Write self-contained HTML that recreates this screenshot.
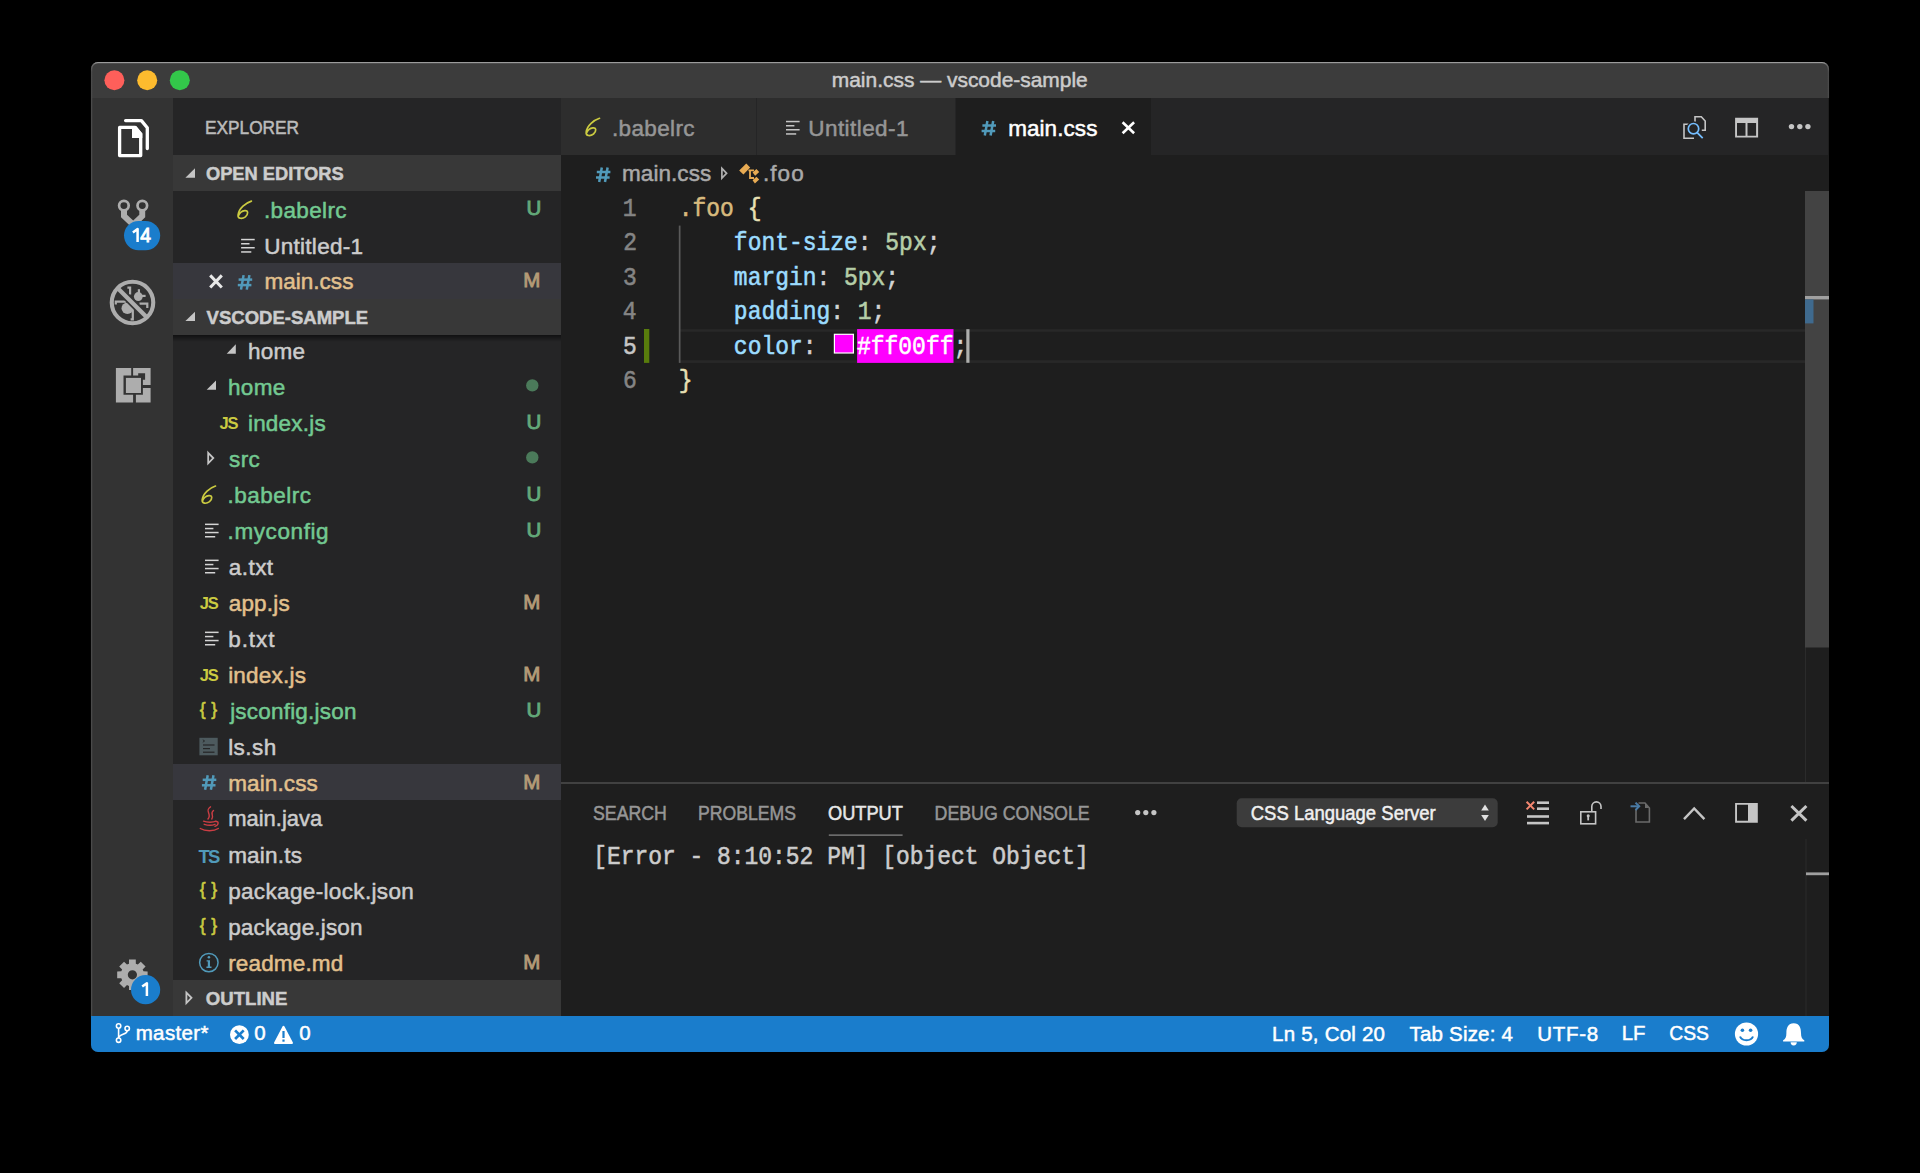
<!DOCTYPE html>
<html><head><meta charset="utf-8"><title>main.css — vscode-sample</title>
<style>html,body{margin:0;padding:0;background:#000;width:1920px;height:1173px;overflow:hidden}svg{display:block}</style>
</head><body>
<svg width="1920" height="1173" viewBox="0 0 1920 1173">
<defs><clipPath id="win"><rect x="91" y="62" width="1738" height="990" rx="7"/></clipPath><linearGradient id="shd" x1="0" y1="0" x2="0" y2="1"><stop offset="0" stop-color="#000" stop-opacity="0.55"/><stop offset="1" stop-color="#000" stop-opacity="0"/></linearGradient></defs>
<g clip-path="url(#win)">
<rect x="91" y="62" width="1738" height="990" fill="#1e1e1e" />
<rect x="91" y="62" width="1738" height="36" fill="#3c3c3c" />
<rect x="92" y="98" width="81" height="918" fill="#333333" />
<rect x="173" y="98" width="388" height="918" fill="#252526" />
<rect x="173" y="155" width="388" height="36" fill="#383838" />
<rect x="173" y="263" width="388" height="36" fill="#37373d" />
<rect x="173" y="764" width="388" height="36" fill="#37373d" />
<rect x="173" y="299" width="388" height="36" fill="#383838" />
<rect x="173" y="335" width="388" height="7" fill="url(#shd)" />
<rect x="173" y="980" width="388" height="36" fill="#383838" />
<rect x="561" y="98" width="1267" height="57" fill="#252526" />
<rect x="561" y="98" width="195" height="57" fill="#2d2d2d" />
<rect x="757" y="98" width="198" height="57" fill="#2d2d2d" />
<rect x="956" y="98" width="195" height="57" fill="#1e1e1e" />
<rect x="561" y="155" width="1267" height="627" fill="#1e1e1e" />
<rect x="680" y="329.2" width="1125" height="2.6" fill="#282828" />
<rect x="680" y="360.3" width="1125" height="2.6" fill="#282828" />
<rect x="678.8" y="225.6" width="1.7" height="137.3" fill="#5a5a5a" />
<rect x="644" y="329" width="5.3" height="33.9" fill="#587c0c" />
<rect x="1805" y="191" width="24" height="591" fill="#1e1e1e" />
<rect x="1805" y="191" width="1" height="591" fill="#2b2b2b" />
<rect x="1805" y="191" width="24" height="456.5" fill="#434343" />
<rect x="1805" y="296" width="24" height="3.4" fill="#a0a0a0" />
<rect x="1805" y="299.4" width="8.5" height="24" fill="#3f6a8e" />
<rect x="561" y="782" width="1268" height="234" fill="#1e1e1e" />
<rect x="561" y="782" width="1268" height="2" fill="#414141" />
<rect x="828.8" y="834.3" width="73.8" height="1.7" fill="#6b6b6b" />
<rect x="1236.7" y="798.3" width="261" height="29" fill="#3c3c3c" rx="5" />
<rect x="1805.5" y="839" width="23.5" height="177" fill="#1e1e1e" />
<rect x="1805.5" y="839" width="1" height="177" fill="#2b2b2b" />
<rect x="1806" y="872.4" width="23" height="2.8" fill="#a0a0a0" />
<rect x="91" y="1016" width="1738" height="36" fill="#1a7dcc" />
</g>
<defs><linearGradient id="edge" gradientUnits="userSpaceOnUse" x1="0" y1="62" x2="0" y2="72"><stop offset="0" stop-color="#a8a8a8"/><stop offset="0.25" stop-color="#6a6a6a"/><stop offset="1" stop-color="#4a4a4a"/></linearGradient></defs>
<path d="M91.6,1016 V69 A6.4,6.4 0 0 1 98,62.6 H1822 A6.4,6.4 0 0 1 1828.4,69 V98" fill="none" stroke="url(#edge)" stroke-width="1.3"/>
<circle cx="114.4" cy="80.2" r="10" fill="#fe5f5a"/>
<circle cx="147.2" cy="80.2" r="10" fill="#fdbb2e"/>
<circle cx="179.8" cy="80.2" r="10" fill="#33c74a"/>
<text x="831.74" y="87" font-family="Liberation Sans" font-size="21" font-weight="400" fill="#cccccc" stroke="#cccccc" stroke-width="0.5" transform="matrix(0.9972,0,0,1,2.353,0)" style="white-space:pre" >main.css — vscode-sample</text>
<text x="204.92" y="134.4" font-family="Liberation Sans" font-size="18.2" font-weight="400" fill="#bbbbbb" stroke="#bbbbbb" stroke-width="0.5" transform="matrix(0.9502,0,0,1,10.209,0)" style="white-space:pre" >EXPLORER</text>
<text x="205.97" y="180.5" font-family="Liberation Sans" font-size="19" font-weight="700" fill="#cccccc" stroke="#cccccc" stroke-width="0.5" transform="matrix(0.9623,0,0,1,7.760,0)" style="white-space:pre" >OPEN EDITORS</text>
<text x="206.61" y="324.2" font-family="Liberation Sans" font-size="19" font-weight="700" fill="#cccccc" stroke="#cccccc" stroke-width="0.5" transform="matrix(0.9756,0,0,1,5.036,0)" style="white-space:pre" >VSCODE-SAMPLE</text>
<text x="205.86" y="1004.8" font-family="Liberation Sans" font-size="19" font-weight="700" fill="#cccccc" stroke="#cccccc" stroke-width="0.5" transform="matrix(0.9781,0,0,1,4.500,0)" style="white-space:pre" >OUTLINE</text>
<text x="263.88" y="217.6" font-family="Liberation Sans" font-size="22.5" font-weight="400" fill="#73c991" stroke="#73c991" stroke-width="0.5" style="letter-spacing:0.384px;white-space:pre" >.babelrc</text>
<text x="264.21" y="253.7" font-family="Liberation Sans" font-size="22.5" font-weight="400" fill="#cccccc" stroke="#cccccc" stroke-width="0.5" style="letter-spacing:0.278px;white-space:pre" >Untitled-1</text>
<text x="264.44" y="289.3" font-family="Liberation Sans" font-size="22.5" font-weight="400" fill="#e2c08d" stroke="#e2c08d" stroke-width="0.5" style="letter-spacing:0.027px;white-space:pre" >main.css</text>
<defs><clipPath id="tree"><rect x="173" y="335" width="388" height="645"/></clipPath></defs>
<g clip-path="url(#tree)">
<text x="248.03" y="358.5" font-family="Liberation Sans" font-size="22.5" font-weight="400" fill="#cccccc" stroke="#cccccc" stroke-width="0.5" style="letter-spacing:0.275px;white-space:pre" >home</text>
<text x="228.03" y="394.5" font-family="Liberation Sans" font-size="22.5" font-weight="400" fill="#73c991" stroke="#73c991" stroke-width="0.5" style="letter-spacing:0.308px;white-space:pre" >home</text>
<text x="247.94" y="430.5" font-family="Liberation Sans" font-size="22.5" font-weight="400" fill="#73c991" stroke="#73c991" stroke-width="0.5" style="letter-spacing:0.211px;white-space:pre" >index.js</text>
<text x="229.04" y="466.5" font-family="Liberation Sans" font-size="22.5" font-weight="400" fill="#73c991" stroke="#73c991" stroke-width="0.5" style="letter-spacing:0.394px;white-space:pre" >src</text>
<text x="227.57" y="502.5" font-family="Liberation Sans" font-size="22.5" font-weight="400" fill="#73c991" stroke="#73c991" stroke-width="0.5" style="letter-spacing:0.484px;white-space:pre" >.babelrc</text>
<text x="227.57" y="538.5" font-family="Liberation Sans" font-size="22.5" font-weight="400" fill="#73c991" stroke="#73c991" stroke-width="0.5" style="letter-spacing:0.597px;white-space:pre" >.myconfig</text>
<text x="228.70" y="574.5" font-family="Liberation Sans" font-size="22.5" font-weight="400" fill="#cccccc" stroke="#cccccc" stroke-width="0.5" style="letter-spacing:0.475px;white-space:pre" >a.txt</text>
<text x="228.70" y="610.5" font-family="Liberation Sans" font-size="22.5" font-weight="400" fill="#e2c08d" stroke="#e2c08d" stroke-width="0.5" style="letter-spacing:0.202px;white-space:pre" >app.js</text>
<text x="228.14" y="646.5" font-family="Liberation Sans" font-size="22.5" font-weight="400" fill="#cccccc" stroke="#cccccc" stroke-width="0.5" style="letter-spacing:0.991px;white-space:pre" >b.txt</text>
<text x="228.14" y="682.5" font-family="Liberation Sans" font-size="22.5" font-weight="400" fill="#e2c08d" stroke="#e2c08d" stroke-width="0.5" style="letter-spacing:0.211px;white-space:pre" >index.js</text>
<text x="230.16" y="718.5" font-family="Liberation Sans" font-size="22.5" font-weight="400" fill="#73c991" stroke="#73c991" stroke-width="0.5" style="letter-spacing:0.203px;white-space:pre" >jsconfig.json</text>
<text x="228.14" y="754.5" font-family="Liberation Sans" font-size="22.5" font-weight="400" fill="#cccccc" stroke="#cccccc" stroke-width="0.5" style="letter-spacing:0.469px;white-space:pre" >ls.sh</text>
<text x="228.14" y="790.5" font-family="Liberation Sans" font-size="22.5" font-weight="400" fill="#e2c08d" stroke="#e2c08d" stroke-width="0.5" style="letter-spacing:0.127px;white-space:pre" >main.css</text>
<text x="228.17" y="826.5" font-family="Liberation Sans" font-size="22.5" font-weight="400" fill="#cccccc" stroke="#cccccc" stroke-width="0.5" transform="matrix(0.9775,0,0,1,5.143,0)" style="white-space:pre" >main.java</text>
<text x="228.14" y="862.5" font-family="Liberation Sans" font-size="22.5" font-weight="400" fill="#cccccc" stroke="#cccccc" stroke-width="0.5" style="letter-spacing:0.215px;white-space:pre" >main.ts</text>
<text x="228.14" y="898.5" font-family="Liberation Sans" font-size="22.5" font-weight="400" fill="#cccccc" stroke="#cccccc" stroke-width="0.5" style="letter-spacing:0.350px;white-space:pre" >package-lock.json</text>
<text x="228.14" y="934.5" font-family="Liberation Sans" font-size="22.5" font-weight="400" fill="#cccccc" stroke="#cccccc" stroke-width="0.5" style="letter-spacing:0.162px;white-space:pre" >package.json</text>
<text x="228.14" y="970.5" font-family="Liberation Sans" font-size="22.5" font-weight="400" fill="#e2c08d" stroke="#e2c08d" stroke-width="0.5" style="letter-spacing:0.172px;white-space:pre" >readme.md</text>
</g>
<text x="526.46" y="215.4" font-family="Liberation Sans" font-size="20.5" font-weight="400" fill="#63aa7a" stroke="#63aa7a" stroke-width="0.9" style="white-space:pre" >U</text>
<text x="523.36" y="287.2" font-family="Liberation Sans" font-size="20.5" font-weight="400" fill="#b49b76" stroke="#b49b76" stroke-width="0.9" style="white-space:pre" >M</text>
<text x="526.46" y="429.1" font-family="Liberation Sans" font-size="20.5" font-weight="400" fill="#63aa7a" stroke="#63aa7a" stroke-width="0.9" style="white-space:pre" >U</text>
<text x="526.46" y="501.1" font-family="Liberation Sans" font-size="20.5" font-weight="400" fill="#63aa7a" stroke="#63aa7a" stroke-width="0.9" style="white-space:pre" >U</text>
<text x="526.46" y="537.1" font-family="Liberation Sans" font-size="20.5" font-weight="400" fill="#63aa7a" stroke="#63aa7a" stroke-width="0.9" style="white-space:pre" >U</text>
<text x="523.36" y="608.9" font-family="Liberation Sans" font-size="20.5" font-weight="400" fill="#b49b76" stroke="#b49b76" stroke-width="0.9" style="white-space:pre" >M</text>
<text x="523.36" y="680.9" font-family="Liberation Sans" font-size="20.5" font-weight="400" fill="#b49b76" stroke="#b49b76" stroke-width="0.9" style="white-space:pre" >M</text>
<text x="526.46" y="717.1" font-family="Liberation Sans" font-size="20.5" font-weight="400" fill="#63aa7a" stroke="#63aa7a" stroke-width="0.9" style="white-space:pre" >U</text>
<text x="523.36" y="788.9" font-family="Liberation Sans" font-size="20.5" font-weight="400" fill="#b49b76" stroke="#b49b76" stroke-width="0.9" style="white-space:pre" >M</text>
<text x="523.36" y="968.9" font-family="Liberation Sans" font-size="20.5" font-weight="400" fill="#b49b76" stroke="#b49b76" stroke-width="0.9" style="white-space:pre" >M</text>
<circle cx="532.3" cy="385.4" r="6.2" fill="#4b7a5a"/>
<circle cx="532.3" cy="457.4" r="6.2" fill="#4b7a5a"/>
<text x="611.98" y="135.6" font-family="Liberation Sans" font-size="22.5" font-weight="400" fill="#969696" stroke="#969696" stroke-width="0.5" style="letter-spacing:0.355px;white-space:pre" >.babelrc</text>
<text x="808.31" y="135.6" font-family="Liberation Sans" font-size="22.5" font-weight="400" fill="#969696" stroke="#969696" stroke-width="0.5" style="letter-spacing:0.433px;white-space:pre" >Untitled-1</text>
<text x="1008.14" y="136" font-family="Liberation Sans" font-size="22.5" font-weight="400" fill="#ffffff" stroke="#ffffff" stroke-width="0.5" style="letter-spacing:0.070px;white-space:pre" >main.css</text>
<text x="622.04" y="181.4" font-family="Liberation Sans" font-size="22.5" font-weight="400" fill="#a9a9a9" stroke="#a9a9a9" stroke-width="0.5" style="letter-spacing:0.055px;white-space:pre" >main.css</text>
<text x="762.98" y="181.4" font-family="Liberation Sans" font-size="22.5" font-weight="400" fill="#a9a9a9" stroke="#a9a9a9" stroke-width="0.5" style="letter-spacing:1.054px;white-space:pre" >.foo</text>
<text x="622.66" y="216.00" font-family="Liberation Mono" font-size="22.95" fill="#858585" stroke="#858585" stroke-width="0.5" transform="matrix(1,0,0,1.15,0,-32.400)">1</text>
<text x="623.24" y="250.40" font-family="Liberation Mono" font-size="22.95" fill="#858585" stroke="#858585" stroke-width="0.5" transform="matrix(1,0,0,1.15,0,-37.560)">2</text>
<text x="623.01" y="284.80" font-family="Liberation Mono" font-size="22.95" fill="#858585" stroke="#858585" stroke-width="0.5" transform="matrix(1,0,0,1.15,0,-42.720)">3</text>
<text x="622.78" y="319.20" font-family="Liberation Mono" font-size="22.95" fill="#858585" stroke="#858585" stroke-width="0.5" transform="matrix(1,0,0,1.15,0,-47.880)">4</text>
<text x="623.01" y="353.60" font-family="Liberation Mono" font-size="22.95" fill="#c6c6c6" stroke="#c6c6c6" stroke-width="0.5" transform="matrix(1,0,0,1.15,0,-53.040)">5</text>
<text x="623.12" y="388.00" font-family="Liberation Mono" font-size="22.95" fill="#858585" stroke="#858585" stroke-width="0.5" transform="matrix(1,0,0,1.15,0,-58.200)">6</text>
<text x="678.80" y="216.00" font-family="Liberation Mono" font-size="22.95" fill="#d7ba7d" stroke="#d7ba7d" stroke-width="0.5" transform="matrix(1,0,0,1.15,0,-32.400)" style="white-space:pre">.foo</text>
<text x="747.65" y="216.00" font-family="Liberation Mono" font-size="22.95" fill="#e8e0b4" stroke="#e8e0b4" stroke-width="0.5" transform="matrix(1,0,0,1.15,0,-32.400)" style="white-space:pre">{</text>
<text x="733.88" y="250.40" font-family="Liberation Mono" font-size="22.95" fill="#9cdcfe" stroke="#9cdcfe" stroke-width="0.5" transform="matrix(1,0,0,1.15,0,-37.560)" style="white-space:pre">font-size</text>
<text x="857.81" y="250.40" font-family="Liberation Mono" font-size="22.95" fill="#d4d4d4" stroke="#d4d4d4" stroke-width="0.5" transform="matrix(1,0,0,1.15,0,-37.560)" style="white-space:pre">:</text>
<text x="885.35" y="250.40" font-family="Liberation Mono" font-size="22.95" fill="#b5cea8" stroke="#b5cea8" stroke-width="0.5" transform="matrix(1,0,0,1.15,0,-37.560)" style="white-space:pre">5px</text>
<text x="926.66" y="250.40" font-family="Liberation Mono" font-size="22.95" fill="#d4d4d4" stroke="#d4d4d4" stroke-width="0.5" transform="matrix(1,0,0,1.15,0,-37.560)" style="white-space:pre">;</text>
<text x="733.88" y="284.80" font-family="Liberation Mono" font-size="22.95" fill="#9cdcfe" stroke="#9cdcfe" stroke-width="0.5" transform="matrix(1,0,0,1.15,0,-42.720)" style="white-space:pre">margin</text>
<text x="816.50" y="284.80" font-family="Liberation Mono" font-size="22.95" fill="#d4d4d4" stroke="#d4d4d4" stroke-width="0.5" transform="matrix(1,0,0,1.15,0,-42.720)" style="white-space:pre">:</text>
<text x="844.04" y="284.80" font-family="Liberation Mono" font-size="22.95" fill="#b5cea8" stroke="#b5cea8" stroke-width="0.5" transform="matrix(1,0,0,1.15,0,-42.720)" style="white-space:pre">5px</text>
<text x="885.35" y="284.80" font-family="Liberation Mono" font-size="22.95" fill="#d4d4d4" stroke="#d4d4d4" stroke-width="0.5" transform="matrix(1,0,0,1.15,0,-42.720)" style="white-space:pre">;</text>
<text x="733.88" y="319.20" font-family="Liberation Mono" font-size="22.95" fill="#9cdcfe" stroke="#9cdcfe" stroke-width="0.5" transform="matrix(1,0,0,1.15,0,-47.880)" style="white-space:pre">padding</text>
<text x="830.27" y="319.20" font-family="Liberation Mono" font-size="22.95" fill="#d4d4d4" stroke="#d4d4d4" stroke-width="0.5" transform="matrix(1,0,0,1.15,0,-47.880)" style="white-space:pre">:</text>
<text x="857.81" y="319.20" font-family="Liberation Mono" font-size="22.95" fill="#b5cea8" stroke="#b5cea8" stroke-width="0.5" transform="matrix(1,0,0,1.15,0,-47.880)" style="white-space:pre">1</text>
<text x="871.58" y="319.20" font-family="Liberation Mono" font-size="22.95" fill="#d4d4d4" stroke="#d4d4d4" stroke-width="0.5" transform="matrix(1,0,0,1.15,0,-47.880)" style="white-space:pre">;</text>
<text x="733.88" y="353.60" font-family="Liberation Mono" font-size="22.95" fill="#9cdcfe" stroke="#9cdcfe" stroke-width="0.5" transform="matrix(1,0,0,1.15,0,-53.040)" style="white-space:pre">color</text>
<text x="802.73" y="353.60" font-family="Liberation Mono" font-size="22.95" fill="#d4d4d4" stroke="#d4d4d4" stroke-width="0.5" transform="matrix(1,0,0,1.15,0,-53.040)" style="white-space:pre">:</text>
<rect x="834.4" y="334.3" width="19" height="18.7" fill="#ff00ff" stroke="#ffffff" stroke-width="1.2"/>
<rect x="857.1" y="329.1" width="96.4" height="33.8" fill="#ff00ff" />
<text x="857.07" y="353.60" font-family="Liberation Mono" font-size="22.95" fill="#ffffff" stroke="#ffffff" stroke-width="0.5" transform="matrix(1,0,0,1.15,0,-53.040)" style="white-space:pre">#ff00ff</text>
<text x="953.46" y="353.60" font-family="Liberation Mono" font-size="22.95" fill="#d4d4d4" stroke="#d4d4d4" stroke-width="0.5" transform="matrix(1,0,0,1.15,0,-53.040)" style="white-space:pre">;</text>
<rect x="966.3" y="329.2" width="3.2" height="33.6" fill="#aeafad" />
<text x="678.80" y="388.00" font-family="Liberation Mono" font-size="22.95" fill="#e8e0b4" stroke="#e8e0b4" stroke-width="0.5" transform="matrix(1,0,0,1.15,0,-58.200)" style="white-space:pre">}</text>
<text x="593.00" y="819.8" font-family="Liberation Sans" font-size="19.3" font-weight="400" fill="#969696" stroke="#969696" stroke-width="0.5" transform="matrix(0.9183,0,0,1,48.461,0)" style="white-space:pre" >SEARCH</text>
<text x="698.09" y="819.8" font-family="Liberation Sans" font-size="19.3" font-weight="400" fill="#969696" stroke="#969696" stroke-width="0.5" transform="matrix(0.9132,0,0,1,60.611,0)" style="white-space:pre" >PROBLEMS</text>
<text x="827.98" y="819.8" font-family="Liberation Sans" font-size="19.3" font-weight="400" fill="#e7e7e7" stroke="#e7e7e7" stroke-width="0.5" transform="matrix(0.9453,0,0,1,45.271,0)" style="white-space:pre" >OUTPUT</text>
<text x="934.58" y="819.8" font-family="Liberation Sans" font-size="19.3" font-weight="400" fill="#969696" stroke="#969696" stroke-width="0.5" transform="matrix(0.9218,0,0,1,73.086,0)" style="white-space:pre" >DEBUG CONSOLE</text>
<text x="1250.77" y="820" font-family="Liberation Sans" font-size="20.5" font-weight="400" fill="#f0f0f0" stroke="#f0f0f0" stroke-width="0.5" transform="matrix(0.9025,0,0,1,121.919,0)" style="white-space:pre" >CSS Language Server</text>
<text x="593.14" y="864.2" font-family="Liberation Mono" font-size="22.95" fill="#cccccc" stroke="#cccccc" stroke-width="0.5" transform="matrix(1,0,0,1.15,0,-129.630)" style="white-space:pre">[Error - 8:10:52 PM] [object Object]</text>
<text x="135.67" y="1040" font-family="Liberation Sans" font-size="20.5" font-weight="400" fill="#ffffff" stroke="#ffffff" stroke-width="0.5" style="letter-spacing:0.378px;white-space:pre" >master*</text>
<text x="254.18" y="1040" font-family="Liberation Sans" font-size="20.5" font-weight="400" fill="#ffffff" stroke="#ffffff" stroke-width="0.5" style="white-space:pre" >0</text>
<text x="299.18" y="1040" font-family="Liberation Sans" font-size="20.5" font-weight="400" fill="#ffffff" stroke="#ffffff" stroke-width="0.5" style="white-space:pre" >0</text>
<text x="1272.11" y="1040.5" font-family="Liberation Sans" font-size="20.5" font-weight="400" fill="#ffffff" stroke="#ffffff" stroke-width="0.5" style="letter-spacing:0.215px;white-space:pre" >Ln 5, Col 20</text>
<text x="1409.59" y="1040.5" font-family="Liberation Sans" font-size="20.5" font-weight="400" fill="#ffffff" stroke="#ffffff" stroke-width="0.5" style="letter-spacing:0.185px;white-space:pre" >Tab Size: 4</text>
<text x="1537.36" y="1040.5" font-family="Liberation Sans" font-size="20.5" font-weight="400" fill="#ffffff" stroke="#ffffff" stroke-width="0.5" style="letter-spacing:0.661px;white-space:pre" >UTF-8</text>
<text x="1621.78" y="1040.5" font-family="Liberation Sans" font-size="20.5" font-weight="400" fill="#ffffff" stroke="#ffffff" stroke-width="0.5" transform="matrix(0.9896,0,0,1,16.844,0)" style="white-space:pre" >LF</text>
<text x="1669.13" y="1040.5" font-family="Liberation Sans" font-size="20.5" font-weight="400" fill="#ffffff" stroke="#ffffff" stroke-width="0.5" transform="matrix(0.9433,0,0,1,94.714,0)" style="white-space:pre" >CSS</text>
<g fill="none" stroke="#ffffff" stroke-width="3.3" stroke-linejoin="round" stroke-linecap="round"><path d="M119.6,127.4 H135.2 L140.7,134 V155.6 H119.6 Z"/><path d="M125.6,120.6 H141.4 L147.3,127.8 V148.6"/></g>
<path d="M132,126 H136 L142.3,133.4 V138 H132 Z" fill="#ffffff"/>
<g fill="none" stroke="#adadad" stroke-width="2.7"><circle cx="123.9" cy="205.6" r="4.8"/><circle cx="142.3" cy="205.6" r="4.8"/></g>
<path d="M121,209.5 H127 V214.8 L133.2,220.6 L139.3,214.8 V209.5 H145.2 V217.3 L136.4,225.8 H130 L121,217.3 Z" fill="#adadad"/>
<rect x="124" y="220.9" width="36.2" height="29.4" rx="14.7" fill="#1a7dcc"/>
<g fill="#adadad"><ellipse cx="127.4" cy="308.2" rx="5.9" ry="5.7"/><ellipse cx="138.3" cy="296.6" rx="4.4" ry="4.5"/></g>
<g fill="none" stroke="#adadad" stroke-width="2.2"><path d="M115.8,304.6 V301.6 H126"/><path d="M130.6,319.4 H132.8 V309"/><path d="M127.4,287.6 H130.1 V294.5"/><path d="M138.9,289.2 V294"/><path d="M141,295.9 H145.6"/><path d="M139.5,303.6 H147.3 V307.9"/></g>
<path d="M117.5,288 L147,317.5" stroke="#333333" stroke-width="7.6"/>
<path d="M117.5,288 L147,317.5" stroke="#adadad" stroke-width="4.3"/>
<circle cx="132.5" cy="302.5" r="20.75" fill="none" stroke="#adadad" stroke-width="4.1"/>
<g fill="#adadad"><path d="M115.9,367.9 H131.2 V375.5 H123.5 V394.7 H133.1 V402.6 H115.9 Z"/><path d="M133.1,367.9 H150.6 V385.1 H142.9 V379.8 H145.1 V373.2 H138.2 V375.5 H133.1 Z"/><path d="M142.9,387.9 H150.6 V402.6 H135.9 V394.7 H142.9 Z"/><rect x="125.9" y="377.9" width="15.1" height="15.1"/></g>
<path d="M128.97,963.72 L129.00,959.58 L135.80,959.58 L135.83,963.72 L137.81,964.54 L140.76,961.63 L145.57,966.44 L142.66,969.39 L143.48,971.37 L147.62,971.40 L147.62,978.20 L143.48,978.23 L142.66,980.21 L145.57,983.16 L140.76,987.97 L137.81,985.06 L135.83,985.88 L135.80,990.02 L129.00,990.02 L128.97,985.88 L126.99,985.06 L124.04,987.97 L119.23,983.16 L122.14,980.21 L121.32,978.23 L117.18,978.20 L117.18,971.40 L121.32,971.37 L122.14,969.39 L119.23,966.44 L124.04,961.63 L126.99,964.54 Z M137.0,974.8 A4.6,4.6 0 1,0 127.80000000000001,974.8 A4.6,4.6 0 1,0 137.0,974.8 Z" fill="#adadad" fill-rule="evenodd"/>
<circle cx="145.6" cy="989.7" r="14.6" fill="#1a7dcc"/>
<path d="M195,168.2 L195,177.7 L185.4,177.7 Z" fill="#c5c5c5"/>
<path d="M195,311.7 L195,321 L185.4,321 Z" fill="#c5c5c5"/>
<path d="M235.8,344.2 L235.8,353.7 L226.7,353.7 Z" fill="#c5c5c5"/>
<path d="M216,380.4 L216,389.8 L206.7,389.8 Z" fill="#c5c5c5"/>
<path d="M208.2,452.8 L213.3,458 L208.2,463.3 Z" fill="none" stroke="#c5c5c5" stroke-width="1.8" stroke-linejoin="miter"/>
<path d="M186.4,992.6 L191.5,997.8 L186.4,1003.1 Z" fill="none" stroke="#c5c5c5" stroke-width="1.8"/>
<path transform="translate(236.9,200.3)" d="M14.5,0.8 C9,2.5 2,8 1.2,14.5 C0.6,18.8 5.5,18.8 8.5,16.5 C11.5,14 11.6,9.8 7.8,10.4 C5,10.8 2.6,13 1.8,15" fill="none" stroke="#cbcb41" stroke-width="1.7" stroke-linecap="round"/>
<g fill="#d4d4d4"><rect x="241.1" y="238.8" width="13.6" height="1.5"/><rect x="241.1" y="243.0" width="8.4" height="1.5"/><rect x="241.1" y="247.0" width="13.6" height="1.5"/><rect x="241.1" y="251.20000000000002" width="10.2" height="1.5"/></g>
<g transform="translate(237.4,274.6) scale(1.0)" stroke="#519aba" stroke-width="2.5" fill="none"><path d="M6.2,0.5 L3.6,15"/><path d="M12,0.5 L9.4,15"/><path d="M1.2,5 H14.8"/><path d="M0.4,10.5 H14"/></g>
<g stroke="#e8e8e8" stroke-width="3" stroke-linecap="butt"><path d="M210.2,275.4 L221.8,287.5"/><path d="M221.8,275.4 L210.2,287.5"/></g>
<text x="219.6" y="428.9" font-family="Liberation Sans" font-weight="700" font-size="16.5" fill="#cbcb41" style="letter-spacing:-1.3px">JS</text>
<path transform="translate(201,485.2)" d="M14.5,0.8 C9,2.5 2,8 1.2,14.5 C0.6,18.8 5.5,18.8 8.5,16.5 C11.5,14 11.6,9.8 7.8,10.4 C5,10.8 2.6,13 1.8,15" fill="none" stroke="#cbcb41" stroke-width="1.7" stroke-linecap="round"/>
<g fill="#d4d4d4"><rect x="205" y="523.6" width="13.6" height="1.5"/><rect x="205" y="527.8000000000001" width="8.4" height="1.5"/><rect x="205" y="531.8000000000001" width="13.6" height="1.5"/><rect x="205" y="536.0" width="10.2" height="1.5"/></g>
<g fill="#d4d4d4"><rect x="205" y="559.6" width="13.6" height="1.5"/><rect x="205" y="563.8000000000001" width="8.4" height="1.5"/><rect x="205" y="567.8000000000001" width="13.6" height="1.5"/><rect x="205" y="572.0" width="10.2" height="1.5"/></g>
<g fill="#d4d4d4"><rect x="205" y="631.6" width="13.6" height="1.5"/><rect x="205" y="635.8000000000001" width="8.4" height="1.5"/><rect x="205" y="639.8000000000001" width="13.6" height="1.5"/><rect x="205" y="644.0" width="10.2" height="1.5"/></g>
<text x="199.8" y="608.9" font-family="Liberation Sans" font-weight="700" font-size="16.5" fill="#cbcb41" style="letter-spacing:-1.3px">JS</text>
<text x="199.8" y="680.9" font-family="Liberation Sans" font-weight="700" font-size="16.5" fill="#cbcb41" style="letter-spacing:-1.3px">JS</text>
<text x="199.8" y="714.5" font-family="Liberation Sans" font-weight="400" font-size="17.5" fill="#cbcb41" stroke="#cbcb41" stroke-width="0.6" style="white-space:pre;letter-spacing:0.4px">{ }</text>
<text x="199.8" y="894.5" font-family="Liberation Sans" font-weight="400" font-size="17.5" fill="#cbcb41" stroke="#cbcb41" stroke-width="0.6" style="white-space:pre;letter-spacing:0.4px">{ }</text>
<text x="199.8" y="930.5" font-family="Liberation Sans" font-weight="400" font-size="17.5" fill="#cbcb41" stroke="#cbcb41" stroke-width="0.6" style="white-space:pre;letter-spacing:0.4px">{ }</text>
<rect x="199.4" y="737.8" width="18.3" height="17.5" fill="#4d5a5e"/>
<g fill="#252526"><rect x="203" y="744.4" width="11.5" height="1.2"/><rect x="203" y="748" width="7" height="1.2"/><rect x="203" y="751.6" width="11.5" height="1.2"/></g>
<path d="M202.8,739.8 L204.6,741 L202.8,742.2" fill="none" stroke="#252526" stroke-width="0.9"/>
<g transform="translate(201.5,774.8) scale(1.0)" stroke="#519aba" stroke-width="2.5" fill="none"><path d="M6.2,0.5 L3.6,15"/><path d="M12,0.5 L9.4,15"/><path d="M1.2,5 H14.8"/><path d="M0.4,10.5 H14"/></g>
<g transform="translate(0,0)" fill="none" stroke="#cc3e44" stroke-width="1.4" stroke-linecap="round"><path d="M210.5,806.8 C204,811 212.5,814 208,819"/><path d="M213.5,810.5 C209.5,813.5 214.5,815.5 211.8,819"/><path d="M203.5,821.2 C207,822.5 213,822.5 216,821.2"/><path d="M204.2,824.3 C207.5,825.4 212.5,825.4 215,824.3"/><path d="M215.8,821.5 C219,821 219,825 215,826.3"/><path d="M200.3,828.5 C205,831.5 214,831.5 218.3,828.5"/></g>
<text x="198.5" y="862.6" font-family="Liberation Sans" font-weight="700" font-size="18.5" fill="#519aba" style="letter-spacing:-1.9px">TS</text>
<circle cx="208.85" cy="962.6" r="9.2" fill="none" stroke="#519aba" stroke-width="1.5"/>
<g fill="#519aba"><circle cx="208.9" cy="957.2" r="1.3"/><path d="M206.6,960.2 H210 V966.6 H211.5 V967.9 H206.4 V966.6 H207.8 V961.5 H206.6 Z"/></g>
<path transform="translate(585,117.5)" d="M14.5,0.8 C9,2.5 2,8 1.2,14.5 C0.6,18.8 5.5,18.8 8.5,16.5 C11.5,14 11.6,9.8 7.8,10.4 C5,10.8 2.6,13 1.8,15" fill="none" stroke="#cbcb41" stroke-width="1.7" stroke-linecap="round"/>
<g fill="#c5c5c5"><rect x="786" y="120.8" width="13.6" height="1.5"/><rect x="786" y="125.0" width="8.4" height="1.5"/><rect x="786" y="129.0" width="13.6" height="1.5"/><rect x="786" y="133.2" width="10.2" height="1.5"/></g>
<g transform="translate(981.2,120.5) scale(1.0)" stroke="#519aba" stroke-width="2.5" fill="none"><path d="M6.2,0.5 L3.6,15"/><path d="M12,0.5 L9.4,15"/><path d="M1.2,5 H14.8"/><path d="M0.4,10.5 H14"/></g>
<g stroke="#ffffff" stroke-width="2.6"><path d="M1122.6,122.3 L1134.1,133.3"/><path d="M1134.1,122.3 L1122.6,133.3"/></g>
<g transform="translate(595.6,167) scale(1.0)" stroke="#519aba" stroke-width="2.5" fill="none"><path d="M6.2,0.5 L3.6,15"/><path d="M12,0.5 L9.4,15"/><path d="M1.2,5 H14.8"/><path d="M0.4,10.5 H14"/></g>
<path d="M721.9,168.4 L726.6,173.3 L721.9,178.2 Z" fill="none" stroke="#b0b0b0" stroke-width="1.7"/>
<g fill="#e8ab53"><path d="M739.2,170.4 L746.25,163.4 L750.2,167.6 L743.4,174.6 Z"/><path d="M752.6,172.6 L756.4,169 L759.2,172 L755.2,175.8 Z"/><path d="M752.6,180.3 L756.4,176.7 L759.2,179.5 L754.9,183.4 Z"/></g>
<path d="M748.5,170.4 H754 M750,170.4 V178 H754" fill="none" stroke="#e8ab53" stroke-width="1.8"/>
<g fill="none" stroke="#c5c5c5" stroke-width="1.6"><path d="M1689,124.3 H1684 V138.2 H1694"/><path d="M1695,126 V116.8 H1701.3 L1705.2,121 V130.3 H1701.8"/></g>
<circle cx="1693.5" cy="128.7" r="5.2" fill="none" stroke="#252526" stroke-width="4.5"/>
<g fill="none" stroke="#75beff" stroke-width="1.7"><circle cx="1693.5" cy="128.7" r="5.2"/><path d="M1697.2,132.6 L1702.7,138.2"/></g>
<path d="M1735.1,117.7 H1758.1 V137.6 H1735.1 Z M1737,123 V135.8 H1745.5 V123 Z M1747.5,123 V135.8 H1756.1 V123 Z" fill="#c5c5c5" fill-rule="evenodd"/>
<g fill="#c5c5c5"><circle cx="1791.5" cy="126.6" r="2.7"/><circle cx="1799.8" cy="126.6" r="2.7"/><circle cx="1807.9" cy="126.6" r="2.7"/></g>
<g fill="#c5c5c5"><circle cx="1137.7" cy="812.6" r="2.6"/><circle cx="1145.8" cy="812.6" r="2.6"/><circle cx="1153.9" cy="812.6" r="2.6"/></g>
<g fill="#e0e0e0"><path d="M1481.2,810.6 L1485,804.6 L1488.8,810.6 Z"/><path d="M1481.2,815 L1485,821 L1488.8,815 Z"/></g>
<g fill="#c5c5c5"><rect x="1537" y="801.4" width="12" height="2.6"/><rect x="1537" y="807.4" width="12" height="2.6"/><rect x="1527" y="815.2" width="22" height="2.6"/><rect x="1527" y="821.8" width="22" height="2.6"/></g>
<g stroke="#f48771" stroke-width="2"><path d="M1526.6,801.8 L1534.2,809.4"/><path d="M1534.2,801.8 L1526.6,809.4"/></g>
<g fill="none" stroke="#c5c5c5" stroke-width="1.6"><rect x="1580.8" y="811.8" width="14.8" height="12"/><path d="M1591.8,811.8 V806.5 A4.6,4.6 0 0 1 1601,806.5 V809"/></g>
<path d="M1588.2,815.6 V820.4" stroke="#c5c5c5" stroke-width="1.8"/><circle cx="1588.2" cy="815.8" r="1.5" fill="#c5c5c5"/>
<path d="M1636,809 V822 H1649.4 V808 L1645,803 H1638.5" fill="none" stroke="#6b6b6b" stroke-width="1.6"/>
<path d="M1645,803 V808 H1649.4 Z" fill="#6b6b6b"/>
<g fill="none" stroke="#4a7ba6" stroke-width="2"><path d="M1630.5,806.3 H1639"/><path d="M1635.5,802.6 L1639.2,806.3 L1635.5,810"/></g>
<path d="M1684,819.2 L1694.2,808.5 L1704.4,819.2" fill="none" stroke="#c5c5c5" stroke-width="2.4"/>
<path d="M1735.1,802.9 H1757.8 V822.7 H1735.1 Z M1737,804.8 V820.8 H1748 V804.8 Z" fill="#c5c5c5" fill-rule="evenodd"/>
<g stroke="#c5c5c5" stroke-width="3"><path d="M1791.4,806 L1806.4,820.6"/><path d="M1806.4,806 L1791.4,820.6"/></g>
<g fill="none" stroke="#ffffff" stroke-width="1.6"><circle cx="118.6" cy="1026" r="2.2"/><circle cx="118.6" cy="1040.2" r="2.2"/><circle cx="127.2" cy="1028.5" r="2.2"/><path d="M118.6,1028.2 V1038"/><path d="M127.2,1030.7 C127.2,1035 119,1033.5 118.6,1038"/></g>
<circle cx="239.4" cy="1034.7" r="9.4" fill="#ffffff"/>
<g stroke="#1a7dcc" stroke-width="2.7"><path d="M235.1,1030.4 L243.7,1039"/><path d="M243.7,1030.4 L235.1,1039"/></g>
<path d="M283.5,1026.8 L292,1042.9 H275 Z" fill="#ffffff" stroke="#ffffff" stroke-width="2" stroke-linejoin="round"/>
<g fill="#1a7dcc"><rect x="282.4" y="1031" width="2.2" height="7"/><rect x="282.4" y="1039.5" width="2.2" height="2.2"/></g>
<circle cx="1746.5" cy="1034" r="11.6" fill="#ffffff"/>
<g fill="#1a7dcc"><circle cx="1742.4" cy="1030.2" r="1.8"/><circle cx="1750.6" cy="1030.2" r="1.8"/></g>
<path d="M1740,1036.5 C1742,1041.5 1751,1041.5 1753,1036.5" fill="none" stroke="#1a7dcc" stroke-width="2"/>
<path d="M1793.7,1023.3 C1799.5,1023.3 1801,1028 1801,1033 C1801,1037 1802,1039 1804.3,1040.3 V1041.5 H1783.1 V1040.3 C1785.4,1039 1786.4,1037 1786.4,1033 C1786.4,1028 1788,1023.3 1793.7,1023.3 Z" fill="#ffffff"/>
<path d="M1790.6,1042.3 A3.1,3.1 0 0 0 1796.8,1042.3 Z" fill="#ffffff"/>
<path d="M132.9,232.6 L137.6,229 V242.1" fill="none" stroke="#ffffff" stroke-width="2.5" stroke-linejoin="round"/>
<text x="140.21" y="242.1" font-family="Liberation Sans" font-size="19.3" font-weight="400" fill="#ffffff" stroke="#ffffff" stroke-width="0.9" style="white-space:pre" >4</text>
<path d="M142.2,986.6 L146.9,983.2 V996" fill="none" stroke="#ffffff" stroke-width="2.5" stroke-linejoin="round"/>
</svg>
</body></html>
